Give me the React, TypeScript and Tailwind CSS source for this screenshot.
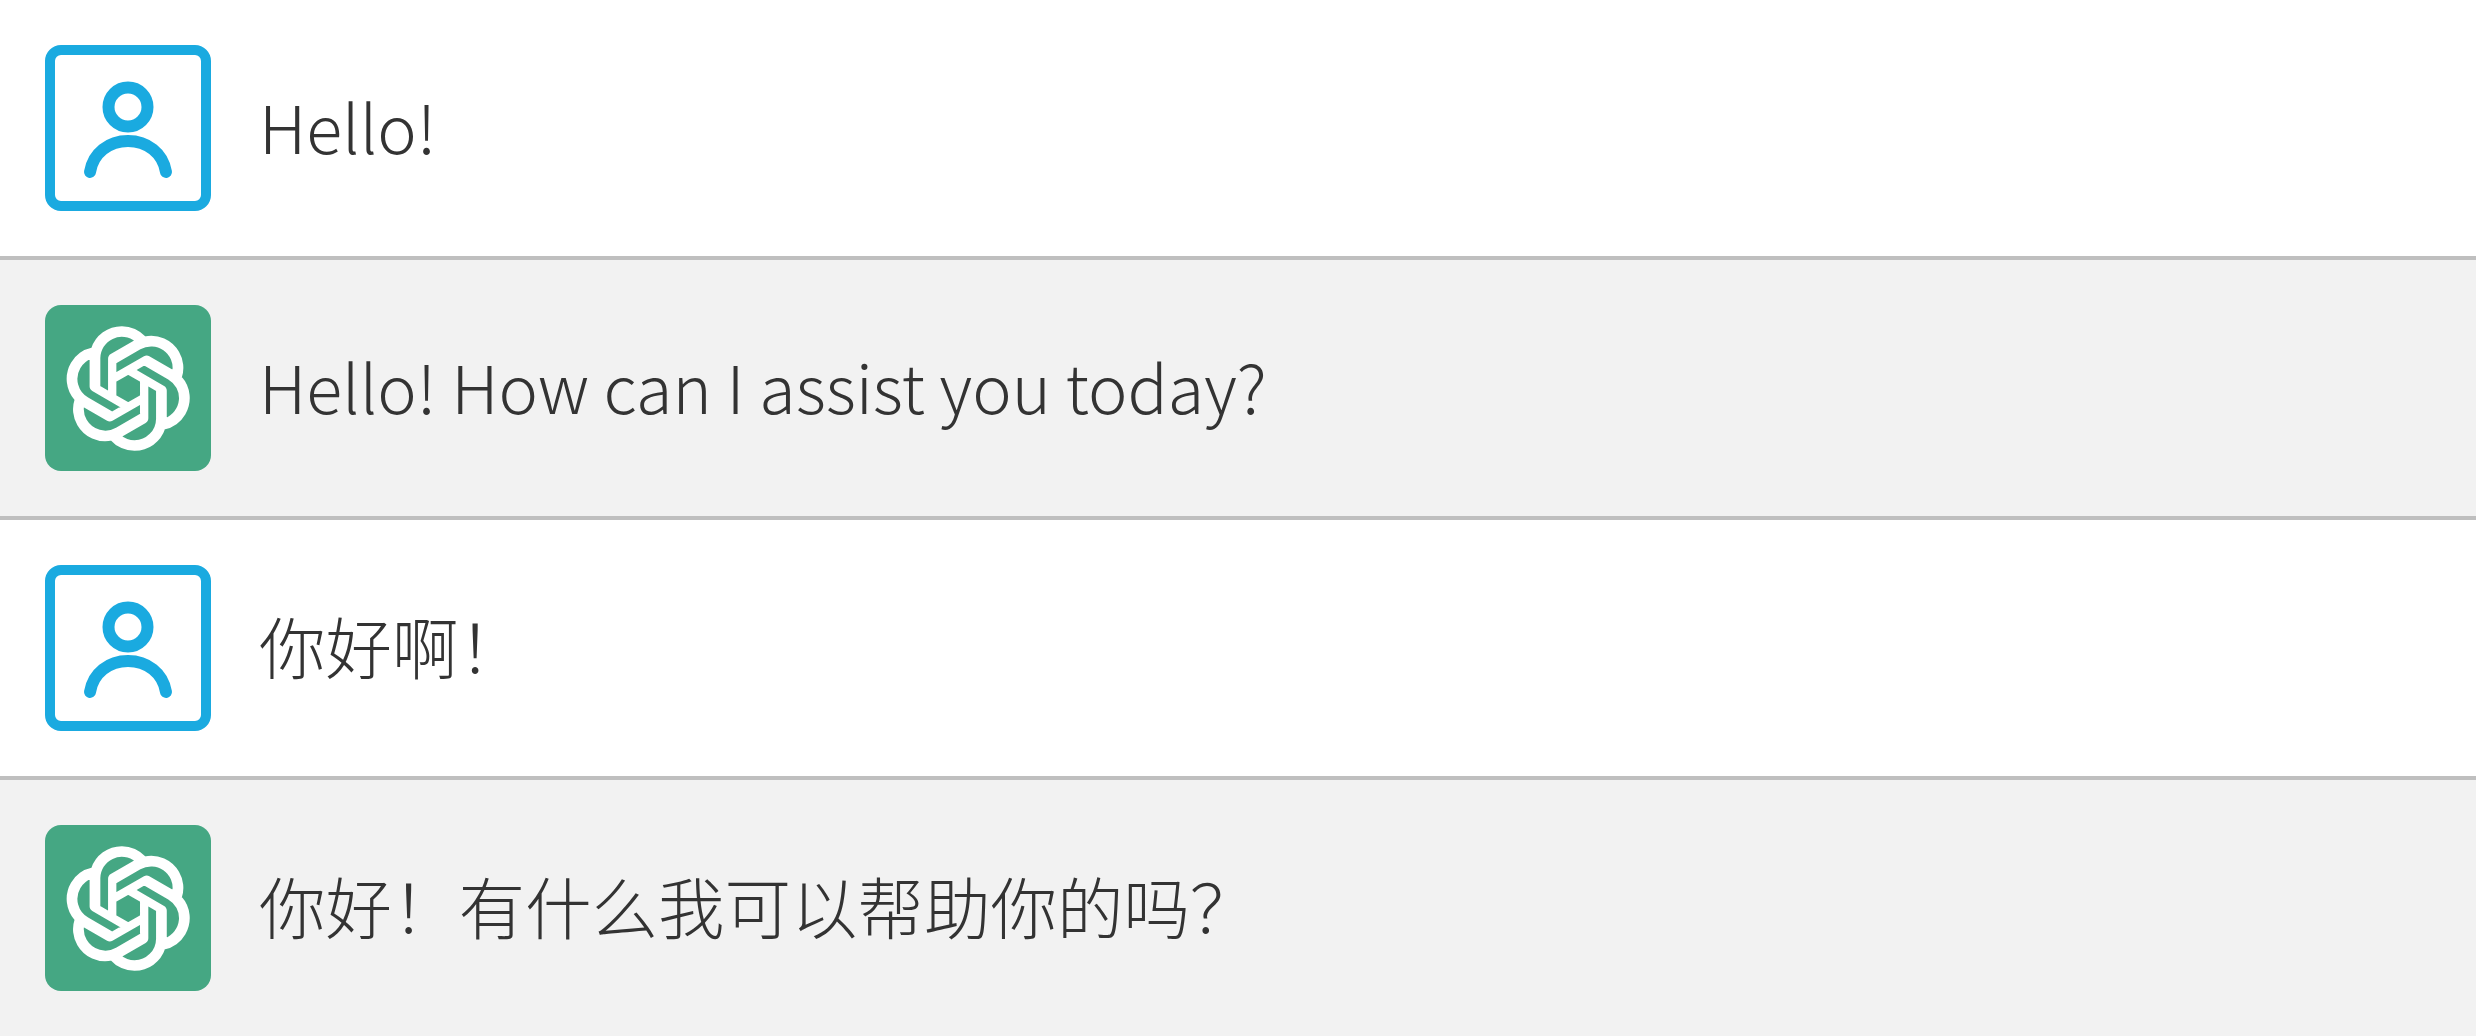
const logoPath =
  "M37.5324 16.8707C37.9808 15.5241 38.1363 14.0974 37.9886 12.6859C37.8409 11.2744 37.3934 9.91076 36.676 8.68622C35.6126 6.83404 33.9882 5.3676 32.0373 4.4985C30.0864 3.62941 27.9098 3.40259 25.8215 3.85078C24.8796 2.7893 23.7219 1.94125 22.4257 1.36341C21.1295 0.785575 19.7249 0.491269 18.3058 0.500197C16.1708 0.495044 14.0893 1.16803 12.3614 2.42214C10.6335 3.67624 9.34853 5.44666 8.6917 7.47815C7.30085 7.76286 5.98686 8.3414 4.8377 9.17505C3.68854 10.0087 2.73073 11.0782 2.02839 12.312C0.956464 14.1591 0.498905 16.2988 0.721698 18.4228C0.944492 20.5467 1.83612 22.5449 3.268 24.1293C2.81966 25.4759 2.66413 26.9026 2.81182 28.3141C2.95951 29.7256 3.40701 31.0892 4.12437 32.3138C5.18791 34.1659 6.8123 35.6322 8.76321 36.5013C10.7141 37.3704 12.8907 37.5973 14.9789 37.1492C15.9208 38.2107 17.0786 39.0587 18.3747 39.6366C19.6709 40.2144 21.0755 40.5087 22.4946 40.4998C24.6307 40.5054 26.7133 39.8321 28.4418 38.5772C30.1704 37.3223 31.4556 35.5506 32.1119 33.5179C33.5027 33.2332 34.8167 32.6547 35.9659 31.821C37.115 30.9874 38.0728 29.9178 38.7752 28.684C39.8458 26.8371 40.3023 24.6979 40.0789 22.5748C39.8556 20.4517 38.9639 18.4544 37.5324 16.8707ZM22.4978 37.8849C20.7443 37.8874 19.0459 37.2733 17.6994 36.1501C17.7601 36.117 17.8666 36.0586 17.936 36.0161L25.9004 31.4156C26.1003 31.3019 26.2663 31.137 26.3813 30.9378C26.4964 30.7386 26.5563 30.5124 26.5549 30.2825V19.0542L29.9213 20.998C29.9389 21.0068 29.9541 21.0198 29.9656 21.0359C29.977 21.052 29.9842 21.0707 29.9867 21.0902V30.3889C29.9842 32.375 29.1946 34.2791 27.7909 35.6841C26.3872 37.0892 24.4838 37.8806 22.4978 37.8849ZM6.39227 31.0064C5.51397 29.4888 5.19742 27.7107 5.49804 25.9832C5.55718 26.0187 5.66048 26.0818 5.73461 26.1244L13.699 30.7248C13.8975 30.8408 14.1233 30.902 14.3532 30.902C14.583 30.902 14.8088 30.8408 15.0073 30.7248L24.731 25.1103V28.9979C24.7321 29.0177 24.7283 29.0376 24.7199 29.0556C24.7115 29.0736 24.6988 29.0893 24.6829 29.1012L16.6317 33.7497C14.9096 34.7416 12.8643 35.0097 10.9447 34.4954C9.02506 33.9811 7.38785 32.7263 6.39227 31.0064ZM4.29707 13.6194C5.17156 12.0998 6.55279 10.9364 8.19885 10.3327C8.19885 10.4013 8.19491 10.5228 8.19491 10.6071V19.808C8.19351 20.0378 8.25334 20.2638 8.36823 20.4629C8.48312 20.6619 8.64893 20.8267 8.84863 20.9404L18.5723 26.5542L15.206 28.4979C15.1894 28.5089 15.1703 28.5155 15.1505 28.5173C15.1307 28.5191 15.1107 28.516 15.0924 28.5082L7.04046 23.8557C5.32135 22.8601 4.06716 21.2235 3.55289 19.3046C3.03862 17.3858 3.30624 15.3413 4.29707 13.6194ZM31.955 20.0556L22.2312 14.4411L25.5976 12.4981C25.6142 12.4872 25.6333 12.4805 25.6531 12.4787C25.6729 12.4769 25.6928 12.4801 25.7111 12.4879L33.7631 17.1364C34.9967 17.849 36.0017 18.8982 36.6606 20.1613C37.3194 21.4244 37.6047 22.849 37.4832 24.2684C37.3617 25.6878 36.8382 27.0432 35.9743 28.1759C35.1103 29.3086 33.9415 30.1717 32.6047 30.6641C32.6047 30.5947 32.6047 30.4733 32.6047 30.3889V21.188C32.6066 20.9586 32.5474 20.7328 32.4332 20.5338C32.319 20.3348 32.154 20.1698 31.955 20.0556ZM35.3055 15.0128C35.2464 14.9765 35.1431 14.9142 35.069 14.8717L27.1045 10.2712C26.906 10.1554 26.6803 10.0943 26.4504 10.0943C26.2206 10.0943 25.9948 10.1554 25.7963 10.2712L16.0726 15.8858V11.9982C16.0715 11.9783 16.0753 11.9585 16.0837 11.9405C16.0921 11.9225 16.1048 11.9068 16.1207 11.8949L24.1719 7.25025C25.4053 6.53903 26.8158 6.19376 28.2383 6.25482C29.6608 6.31589 31.0364 6.78077 32.2044 7.59508C33.3723 8.40939 34.2842 9.53945 34.8334 10.8531C35.3826 12.1667 35.5464 13.6095 35.3055 15.0128ZM14.2424 21.9419L10.8752 19.9981C10.8576 19.9893 10.8423 19.9763 10.8309 19.9602C10.8195 19.9441 10.8122 19.9254 10.8098 19.9058V10.6071C10.8107 9.18295 11.2173 7.78848 11.9819 6.58696C12.7466 5.38544 13.8377 4.42659 15.1275 3.82264C16.4173 3.21869 17.8524 2.99464 19.2649 3.1767C20.6775 3.35876 22.0089 3.93941 23.1034 4.85067C23.0427 4.88379 22.937 4.94215 22.8668 4.98473L14.9024 9.58517C14.7025 9.69878 14.5366 9.86356 14.4215 10.0626C14.3065 10.2616 14.2466 10.4877 14.2479 10.7175L14.2424 21.9419ZM16.071 17.9991L20.4018 15.4978L24.7325 17.9975V22.9985L20.4018 25.4983L16.071 22.9985V17.9991Z";

function UserAvatar() {
  return (
    <div className="h-[166px] w-[166px] shrink-0 rounded-[16px] border-[10px] border-[#1aaae0] bg-white">
      <svg viewBox="0 0 146 146" className="h-full w-full" fill="none" stroke="#1aaae0" strokeWidth="12" strokeLinecap="round">
        <circle cx="73" cy="52" r="19.5" />
        <path d="M35 117C38 98 54 86 73 86S108 98 111 117" />
      </svg>
    </div>
  );
}

function BotAvatar() {
  return (
    <div className="flex h-[166px] w-[166px] shrink-0 items-center justify-center rounded-[16px] bg-[#45a783]">
      <svg viewBox="0 0 41 41" className="h-[125px] w-[125px]" fill="#fff" stroke="#fff" strokeWidth="0.9">
        <path d={logoPath} />
      </svg>
    </div>
  );
}

const messages = [
  { role: "user", text: "Hello!" },
  { role: "bot", text: "Hello! How can I assist you today?" },
  { role: "user", text: "你好啊！" },
  { role: "bot", text: "你好！有什么我可以帮助你的吗？" },
];

export default function App() {
  return (
    <div className="flex h-[1036px] w-[2476px] flex-col overflow-hidden bg-white font-['Noto_Sans_CJK_SC',sans-serif] font-light text-[#333]">
      {messages.map((m, i) => (
        <div
          key={i}
          className={
            "flex items-center gap-[48px] px-[45px] " +
            (i < 3 ? "h-[260px] border-b-4 border-[#bfbfbf] " : "flex-1 ") +
            (m.role === "bot" ? "bg-[#f2f2f2]" : "bg-white")
          }
        >
          {m.role === "bot" ? <BotAvatar /> : <UserAvatar />}
          <p className="-mt-[6px] text-[66.5px] leading-none">{m.text}</p>
        </div>
      ))}
    </div>
  );
}
